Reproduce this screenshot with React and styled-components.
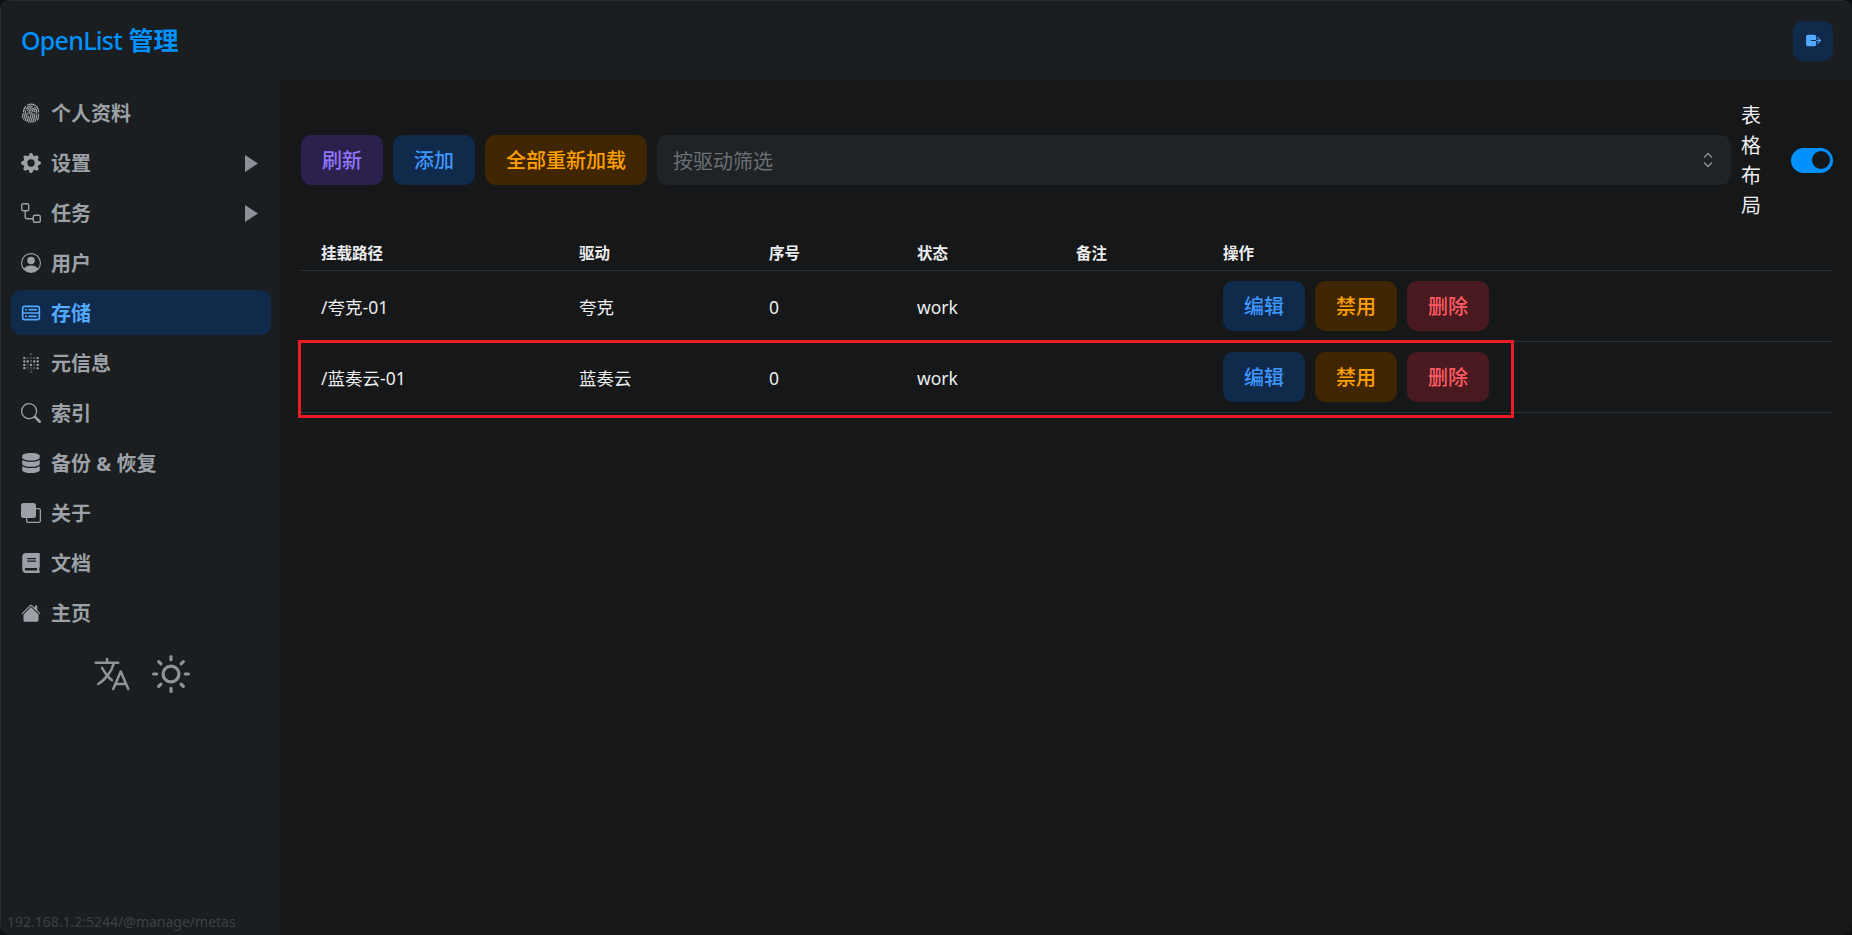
import React from "react";
import styled, { createGlobalStyle } from "styled-components";
import { BsFingerprint, BsGearFill, BsPersonCircle, BsSearch, BsFront, BsHouseFill } from "react-icons/bs";
import { CgDatabase } from "react-icons/cg";
import { SiMetabase } from "react-icons/si";
import { FaDatabase, FaBook } from "react-icons/fa";
import { IoExit, IoLanguageOutline } from "react-icons/io5";
import { FiSun } from "react-icons/fi";

const FONT = `"Noto Sans", "Noto Sans CJK SC", sans-serif`;

const Global = createGlobalStyle`
  html, body { margin: 0; padding: 0; height: 100%; background: #0f1011; overflow: hidden; }
  body { font-family: ${FONT}; color: #ecedee; }
  * { box-sizing: border-box; }
`;

const Page = styled.div`
  width: 1852px;
  height: 935px;
  display: flex;
  flex-direction: column;
  background: #151719;
  border-style: solid;
  border-color: #2a2d2f;
  border-width: 1px 0 0 1px;
  border-radius: 10px;
  overflow: hidden;
`;
const Header = styled.header`
  height: 79px;
  flex: none;
  display: flex;
  align-items: center;
  justify-content: space-between;
  padding: 0 19px 0 20px;
  background: #1a1e20;
`;
const Title = styled.h1`
  margin: 0;
  font-size: 25px;
  font-weight: 500;
  line-height: 1;
  color: #0091ff;
`;
const TitleLatin = styled.span`
  letter-spacing: -0.75px;
`;
const TitleCjk = styled.span`
  font-weight: 700;
`;
const LogoutButton = styled.button`
  width: 40px;
  height: 40px;
  padding: 0;
  display: flex;
  align-items: center;
  justify-content: center;
  border: none;
  border-radius: 10px;
  background: #102a4c;
  color: #52a9ff;
  font-size: 17px;
`;
const Body = styled.div`
  flex: 1;
  display: flex;
  min-height: 0;
`;
const Sidebar = styled.nav`
  width: 279px;
  flex: none;
  padding: 10px 9px 0 10px;
  background: #1a1e20;
  display: flex;
  flex-direction: column;
  gap: 5px;
`;
const NavItem = styled.a`
  height: 45px;
  display: flex;
  align-items: center;
  padding: 1px 10px 0;
  border-radius: 10px;
  font-size: 20px;
  font-weight: 700;
  color: ${(p) => (p.$active ? "#52a9ff" : "#9ba1a6")};
  background: ${(p) => (p.$active ? "#102a4c" : "transparent")};
`;
const NavIcon = styled.span`
  width: 20px;
  height: 20px;
  flex: none;
  margin-right: 10px;
  display: flex;
  align-items: center;
  justify-content: center;
  font-size: 20px;
`;
const NavLabel = styled.span`
  flex: 1;
  line-height: 1;
  padding-top: 1px;
`;
const Caret = styled.svg`
  width: 13px;
  height: 17px;
  margin-right: 3px;
  fill: #8b9197;
`;
const SidebarTools = styled.div`
  display: flex;
  justify-content: center;
  align-items: center;
  gap: 20px;
  margin-top: 14px;
  color: #8f9499;
  line-height: 0;
`;
const Main = styled.main`
  flex: 1;
  min-width: 0;
  padding: 20px 19px 0 21px;
`;
const Toolbar = styled.div`
  display: flex;
  align-items: center;
  gap: 10px;
`;
const ActionButton = styled.button`
  height: 50px;
  padding: 2px 21px 0;
  flex: none;
  border: none;
  border-radius: 10px;
  font-family: ${FONT};
  font-size: 20px;
  font-weight: 500;
  line-height: 1;
  white-space: nowrap;
  color: ${(p) => p.$fg};
  background: ${(p) => p.$bg};
`;
const SelectBox = styled.div`
  flex: 1;
  height: 50px;
  display: flex;
  align-items: center;
  justify-content: space-between;
  padding: 0 16px;
  border-radius: 10px;
  background: #202325;
  font-size: 20px;
  color: #697177;
`;
const LayoutLabel = styled.div`
  width: 20px;
  font-size: 20px;
  line-height: 30px;
  color: #ecedee;
  margin-right: 20px;
  transform: translateY(1px);
`;
const Toggle = styled.span`
  width: 42px;
  height: 25px;
  flex: none;
  display: flex;
  align-items: center;
  justify-content: flex-end;
  padding: 0 3px;
  border-radius: 13px;
  background: #0091ff;
`;
const Knob = styled.span`
  width: 18px;
  height: 18px;
  border-radius: 50%;
  background: #151719;
`;
const Table = styled.div`
  margin-top: 6px;
`;
const Row = styled.div`
  display: grid;
  grid-template-columns: 258px 190px 148px 159px 147px 1fr;
  align-items: center;
  height: ${(p) => (p.$head ? "45px" : "71px")};
  padding-top: ${(p) => (p.$head ? "8px" : "0")};
  border-bottom: 1px solid #2f3235;
`;
const HeadCell = styled.div`
  padding-left: 20px;
  font-size: 15.5px;
  font-weight: 700;
  color: #ecedee;
`;
const Cell = styled.div`
  padding: 1px 0 0 20px;
  font-size: 17.5px;
  color: #ecedee;
  white-space: nowrap;
`;
const ActionGroup = styled.div`
  padding-left: 20px;
  display: flex;
  gap: 10px;
`;
const Annotation = styled.div`
  position: absolute;
  left: 298px;
  top: 340px;
  width: 1216px;
  height: 78px;
  border: 3px solid #ed1c24;
  pointer-events: none;
`;
const StatusUrl = styled.div`
  position: absolute;
  left: 7px;
  bottom: 4px;
  font-size: 14px;
  color: #3d4144;
`;

const BLUE = { $fg: "#3d97ff", $bg: "#102a4c" };
const ORANGE = { $fg: "#ffa000", $bg: "#3f2500" };
const RED = { $fg: "#ff5a63", $bg: "#481a1f" };
const PURPLE = { $fg: "#9076ff", $bg: "#2c214c" };

function TasksIcon() {
  return (
    <svg width="20" height="20" viewBox="0 0 20 20" fill="none" stroke="currentColor" strokeWidth="1.4">
      <rect x="0.7" y="0.7" width="7" height="7" rx="1.5" />
      <rect x="12.3" y="12.3" width="7" height="7" rx="1.5" />
      <path d="M4.2 7.7 V13.5 Q4.2 15.8 6.5 15.8 H12.3" />
    </svg>
  );
}

const NAV = [
  ["个人资料", BsFingerprint],
  ["设置", BsGearFill, "caret"],
  ["任务", TasksIcon, "caret"],
  ["用户", BsPersonCircle],
  ["存储", CgDatabase, null, true],
  ["元信息", SiMetabase],
  ["索引", BsSearch],
  ["备份 & 恢复", FaDatabase],
  ["关于", BsFront],
  ["文档", FaBook],
  ["主页", BsHouseFill],
];

const ROWS = [
  ["/夸克-01", "夸克"],
  ["/蓝奏云-01", "蓝奏云"],
];

export default function App() {
  return (
    <Page>
      <Global />
      <Header>
        <Title>
          <TitleLatin>OpenList</TitleLatin> <TitleCjk>管理</TitleCjk>
        </Title>
        <LogoutButton aria-label="logout">
          <IoExit />
        </LogoutButton>
      </Header>
      <Body>
        <Sidebar>
          {NAV.map(([label, Icon, caret, active]) => (
            <NavItem key={label} $active={active}>
              <NavIcon>
                <Icon />
              </NavIcon>
              <NavLabel>{label}</NavLabel>
              {caret && (
                <Caret viewBox="0 0 13 17">
                  <path d="M0 0 L13 8.5 L0 17 Z" />
                </Caret>
              )}
            </NavItem>
          ))}
          <SidebarTools>
            <IoLanguageOutline size={40} />
            <FiSun size={38} />
          </SidebarTools>
        </Sidebar>
        <Main>
          <Toolbar>
            <ActionButton {...PURPLE}>刷新</ActionButton>
            <ActionButton {...BLUE}>添加</ActionButton>
            <ActionButton {...ORANGE}>全部重新加载</ActionButton>
            <SelectBox>
              按驱动筛选
              <svg width="14" height="18" viewBox="0 0 14 18" fill="none" stroke="#8b9197" strokeWidth="1.4">
                <path d="M3 6.5 L7 2.5 L11 6.5 M3 11.5 L7 15.5 L11 11.5" />
              </svg>
            </SelectBox>
            <LayoutLabel>表格布局</LayoutLabel>
            <Toggle>
              <Knob />
            </Toggle>
          </Toolbar>
          <Table>
            <Row $head>
              {["挂载路径", "驱动", "序号", "状态", "备注", "操作"].map((h) => (
                <HeadCell key={h}>{h}</HeadCell>
              ))}
            </Row>
            {ROWS.map(([path, driver]) => (
              <Row key={path}>
                <Cell>{path}</Cell>
                <Cell>{driver}</Cell>
                <Cell>0</Cell>
                <Cell>work</Cell>
                <Cell />
                <ActionGroup>
                  <ActionButton {...BLUE}>编辑</ActionButton>
                  <ActionButton {...ORANGE}>禁用</ActionButton>
                  <ActionButton {...RED}>删除</ActionButton>
                </ActionGroup>
              </Row>
            ))}
          </Table>
        </Main>
      </Body>
      <Annotation />
      <StatusUrl>192.168.1.2:5244/@manage/metas</StatusUrl>
    </Page>
  );
}
